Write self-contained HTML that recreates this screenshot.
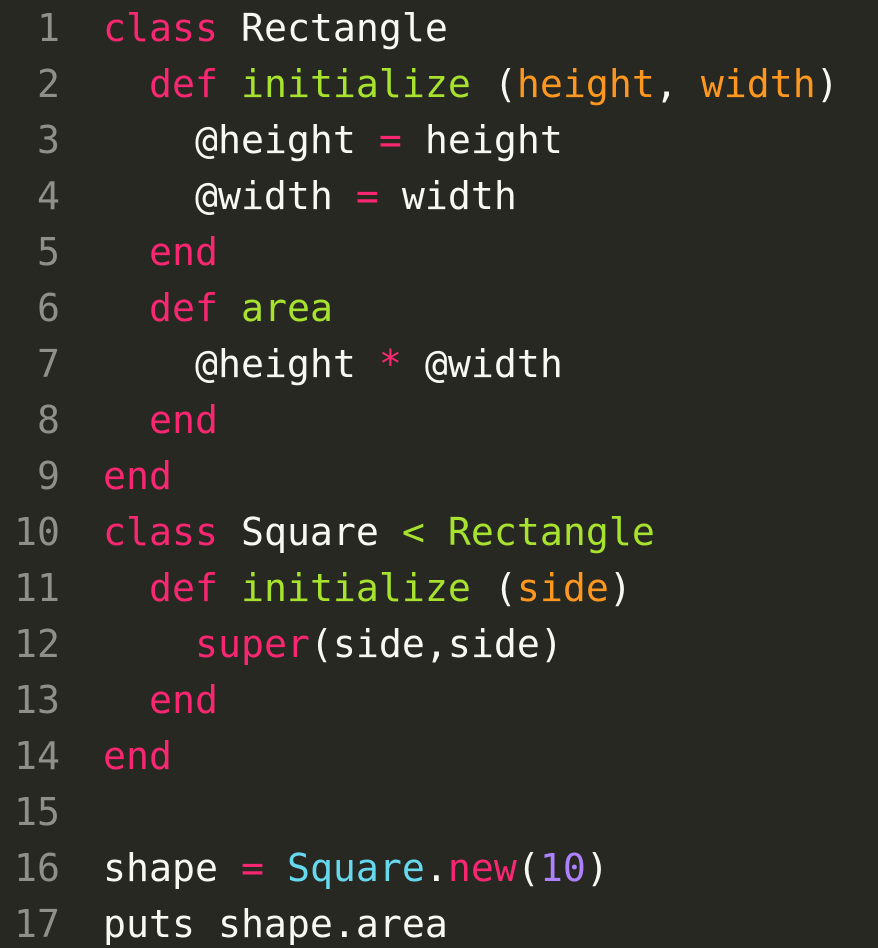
<!DOCTYPE html>
<html><head><meta charset="utf-8"><style>
html,body{margin:0;padding:0;background:#272822;width:878px;height:948px;overflow:hidden}
pre{margin:0;padding-top:1px;font-family:"DejaVu Sans Mono","Liberation Mono",monospace;font-size:38.2px;line-height:56px;color:#f8f8f2;white-space:pre}
.n{display:inline-block;width:60px;text-align:right;color:#8f908a;margin-right:43px}
.k{color:#f92672}.g{color:#a6e22e}.o{color:#fd971f}.c{color:#66d9ef}.p{color:#ae81ff}
</style></head><body><pre>
<span class="n">1</span><span class="k">class</span> Rectangle
<span class="n">2</span>  <span class="k">def</span> <span class="g">initialize</span> (<span class="o">height</span>, <span class="o">width</span>)
<span class="n">3</span>    @height <span class="k">=</span> height
<span class="n">4</span>    @width <span class="k">=</span> width
<span class="n">5</span>  <span class="k">end</span>
<span class="n">6</span>  <span class="k">def</span> <span class="g">area</span>
<span class="n">7</span>    @height <span class="k">*</span> @width
<span class="n">8</span>  <span class="k">end</span>
<span class="n">9</span><span class="k">end</span>
<span class="n">10</span><span class="k">class</span> Square <span class="g">&lt; Rectangle</span>
<span class="n">11</span>  <span class="k">def</span> <span class="g">initialize</span> (<span class="o">side</span>)
<span class="n">12</span>    <span class="k">super</span>(side,side)
<span class="n">13</span>  <span class="k">end</span>
<span class="n">14</span><span class="k">end</span>
<span class="n">15</span>
<span class="n">16</span>shape <span class="k">=</span> <span class="c">Square</span>.<span class="k">new</span>(<span class="p">10</span>)
<span class="n">17</span>puts shape.area
</pre></body></html>
